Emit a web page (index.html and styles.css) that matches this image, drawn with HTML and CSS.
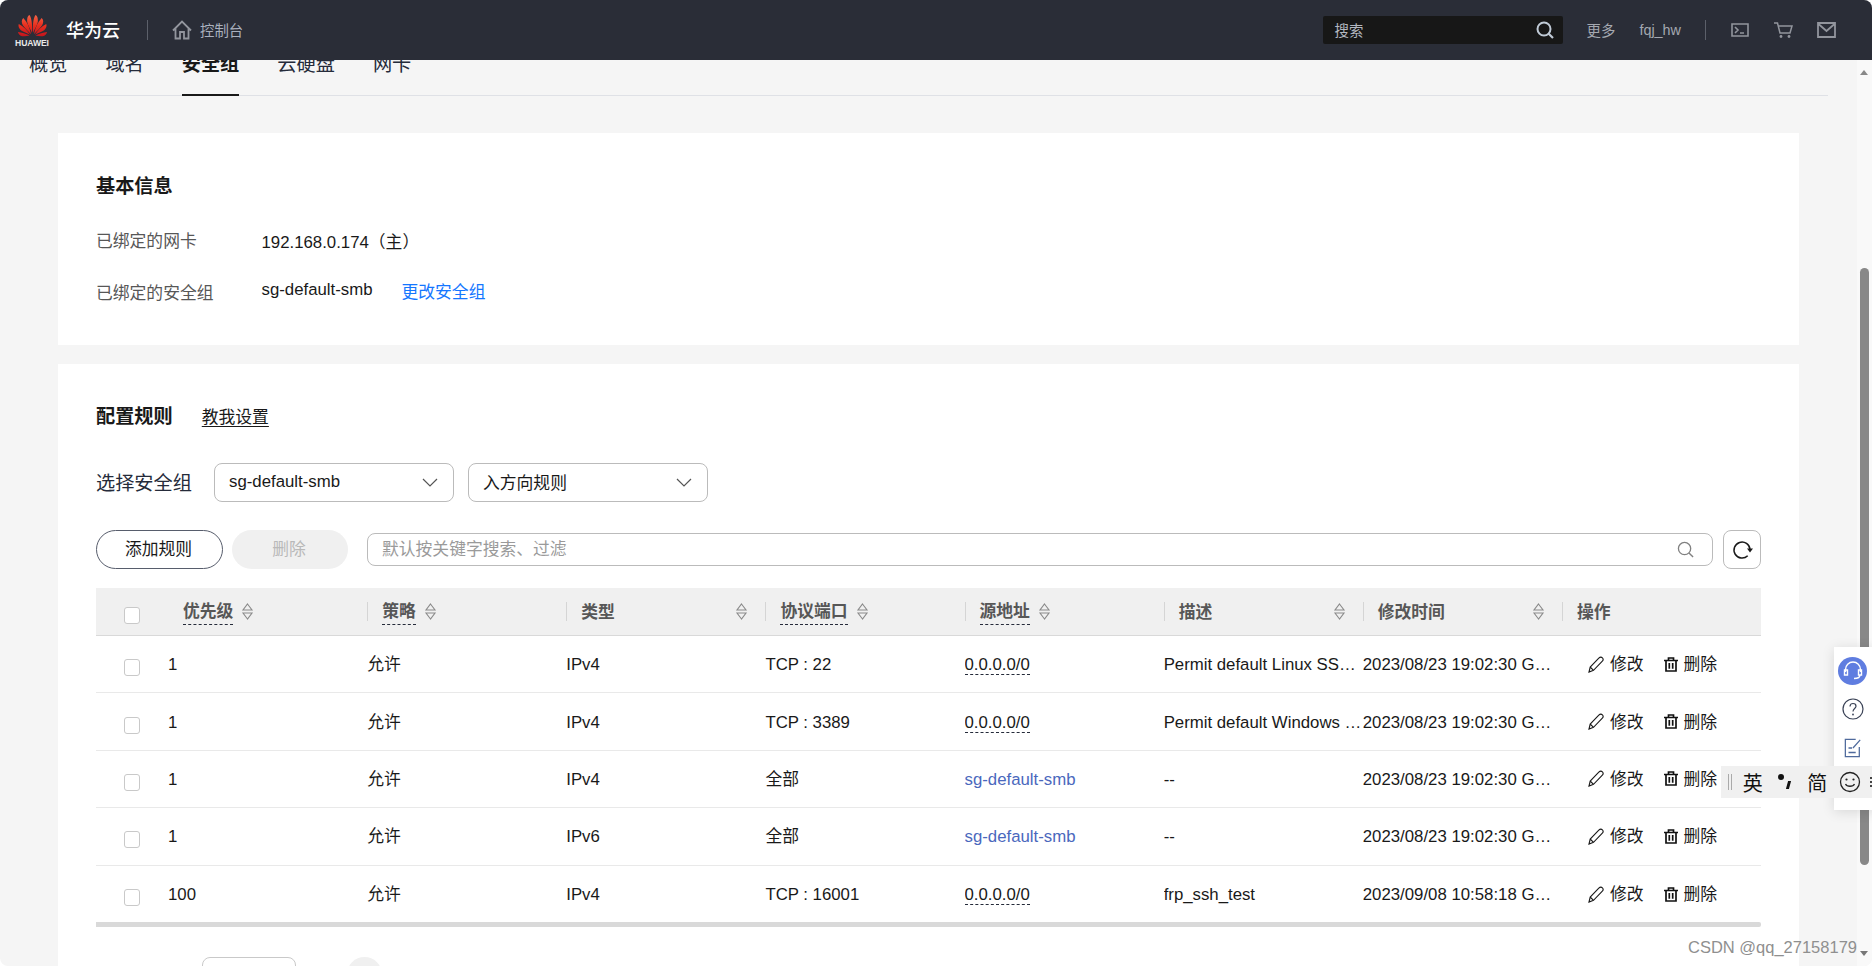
FILE: index.html
```html
<!DOCTYPE html>
<html lang="zh-CN">
<head>
<meta charset="utf-8">
<title>安全组</title>
<link rel="stylesheet" href="styles.css">
</head>
<body>
<svg class="defs" width="0" height="0" aria-hidden="true">
  <defs>
    <linearGradient id="petal" gradientUnits="userSpaceOnUse" x1="16" y1="0" x2="16" y2="20"><stop offset="0" stop-color="#f4694a"/><stop offset=".5" stop-color="#e8301f"/><stop offset="1" stop-color="#c4141c"/></linearGradient>
    <symbol id="sort" viewBox="0 0 12 17"><path d="M6 1 10.500 7H1.500ZM6 16 1.500 10H10.500Z" fill="none" stroke="#8a8a8a" stroke-width="1.100"/></symbol>
    <symbol id="pen" viewBox="0 0 16 17"><path d="M1 16 2.200 11 10.800 2.200C12 1 13.400 .9 14.400 1.800 15.400 2.800 15.300 4.200 14.100 5.400L5.500 14.300ZM2.200 11 5.500 14.300" fill="none" stroke="#191919" stroke-width="1.100"/></symbol>
    <symbol id="trash" viewBox="0 0 14 15"><path d="M0 3.500H14M4.500 3.500V1H9.500V3.500M2 3.500V14H12V3.500M5.300 6V11.800M8.700 6V11.800" fill="none" stroke="#111" stroke-width="1.700"/></symbol>
  </defs>
</svg>
<div class="viewport">
  <header class="topbar">
    <div class="brand">
      <div class="logo">
        <svg class="logo-mark" viewBox="0 0 32 20.500" width="31" height="23" preserveAspectRatio="none" aria-hidden="true">
          <g fill="url(#petal)">
            <path d="M13 1C11 1.500 10.200 4 10.500 7 11 10 13.500 13 15.500 17 15.800 11 15.700 5 13 1Z"/>
            <path d="M19 1C21 1.500 21.800 4 21.500 7 21 10 18.500 13 16.500 17 16.200 11 16.300 5 19 1Z"/>
            <path d="M6.500 3.500C4.500 5 4.500 7.500 6 10 8 12.500 11 15 14.500 18 13 12 10.500 7 6.500 3.500Z"/>
            <path d="M25.500 3.500C27.500 5 27.500 7.500 26 10 24 12.500 21 15 17.500 18 19 12 21.500 7 25.500 3.500Z"/>
            <path d="M1.800 9C1 11 2 13 4 14.500 7 16 10 17 13.500 18.500 10.500 14.500 6.500 11 1.800 9Z"/>
            <path d="M30.200 9C31 11 30 13 28 14.500 25 16 22 17 18.500 18.500 21.500 14.500 25.500 11 30.200 9Z"/>
            <path d="M1 16C1.500 18 3 19.500 5.500 19.800 8.500 20 10.500 19.700 13 19.200 9 17.500 5 16.300 1 16Z"/>
            <path d="M31 16C30.500 18 29 19.500 26.500 19.800 23.500 20 21.500 19.700 19 19.200 23 17.500 27 16.300 31 16Z"/>
          </g>
        </svg>
        <span class="logo-word">HUAWEI</span>
      </div>
      <span class="brand-name">华为云</span>
      <span class="bar-sep"></span>
      <svg class="home" viewBox="0 0 20 20" width="20" height="20" aria-hidden="true"><path d="M1 10.500 10 1.500 19 10.500M3.500 8V18.500H8V12H12V18.500H16.500V8" fill="none" stroke="#92959d" stroke-width="1.800"/></svg>
      <span class="console">控制台</span>
    </div>
    <div class="bar-right">
      <div class="global-search">
        <span>搜索</span>
        <svg viewBox="0 0 18 18" width="18" height="18" aria-hidden="true"><circle cx="8" cy="8" r="6.500" fill="none" stroke="#c0cad6" stroke-width="2"/><path d="M12.500 12.500 17 17" stroke="#c0cad6" stroke-width="2.200"/></svg>
      </div>
      <span class="bar-link more">更多</span>
      <span class="bar-link user">fqj_hw</span>
      <span class="bar-sep right"></span>
      <svg class="bar-icon" viewBox="0 0 18 14" width="18" height="14" aria-hidden="true"><path d="M1 1H17V13H1ZM4 4 7 7 4 10M9 10H13" fill="none" stroke="#92959d" stroke-width="1.600"/></svg>
      <svg class="bar-icon" viewBox="0 0 19 16" width="19" height="16" aria-hidden="true"><path d="M0 1H3.500L6 11H16L18 4H4.500" fill="none" stroke="#92959d" stroke-width="1.500"/><circle cx="7" cy="14.500" r="1.400" fill="#92959d"/><circle cx="15" cy="14.500" r="1.400" fill="#92959d"/></svg>
      <svg class="bar-icon tight" viewBox="0 0 19 16" width="19" height="16" aria-hidden="true"><path d="M1 1H18V15H1ZM1.500 2 9.500 9 17.500 2" fill="none" stroke="#92959d" stroke-width="1.800"/></svg>
    </div>
  </header>

  <main class="page">
    <nav class="tabs">
      <span class="tab first">概览</span>
      <span class="tab">域名</span>
      <span class="tab active">安全组</span>
      <span class="tab">云硬盘</span>
      <span class="tab">网卡</span>
    </nav>

    <section class="card info">
      <h2 class="card-title">基本信息</h2>
      <div class="info-row"><span class="info-label">已绑定的网卡</span><span class="info-value">192.168.0.174（主）</span></div>
      <div class="info-row second"><span class="info-label">已绑定的安全组</span><span class="info-value up">sg-default-smb</span><a class="change-link">更改安全组</a></div>
    </section>

    <section class="card rules">
      <div class="rules-head"><h2 class="card-title nudge">配置规则</h2><a class="teach">教我设置</a></div>
      <div class="select-row">
        <span class="select-label">选择安全组</span>
        <div class="select"><span class="select-value">sg-default-smb</span><svg class="chev" viewBox="0 0 16 9" width="16" height="9" aria-hidden="true"><path d="M1 1 8 8 15 1" fill="none" stroke="#555" stroke-width="1.200"/></svg></div>
        <div class="select"><span class="select-value">入方向规则</span><svg class="chev" viewBox="0 0 16 9" width="16" height="9" aria-hidden="true"><path d="M1 1 8 8 15 1" fill="none" stroke="#555" stroke-width="1.200"/></svg></div>
      </div>
      <div class="tool-row">
        <button class="btn primary">添加规则</button>
        <button class="btn disabled">删除</button>
        <div class="filter">
          <span class="placeholder">默认按关键字搜索、过滤</span>
          <svg viewBox="0 0 18 18" width="17" height="17" aria-hidden="true"><circle cx="8" cy="8" r="6.500" fill="none" stroke="#808080" stroke-width="1.400"/><path d="M12.700 12.700 17 17" stroke="#808080" stroke-width="1.500"/></svg>
        </div>
        <button class="refresh" aria-label="刷新"><svg viewBox="0 0 21 20" width="21" height="20" aria-hidden="true"><path d="M15.700 15.700A8 8 0 1 1 18 9.500" fill="none" stroke="#191919" stroke-width="1.500"/><path d="M15 8.500H21L18 12.500Z" fill="#191919"/></svg></button>
      </div>

      <div class="table">
        <div class="thead">
          <div class="cell-check"><span class="checkbox"></span></div>
          <div class="th first"><span class="tip">优先级</span><svg class="sort near"><use href="#sort"/></svg></div>
          <div class="th"><span class="tip">策略</span><svg class="sort near"><use href="#sort"/></svg></div>
          <div class="th"><span class="plain">类型</span><svg class="sort far"><use href="#sort"/></svg></div>
          <div class="th"><span class="tip">协议端口</span><svg class="sort near"><use href="#sort"/></svg></div>
          <div class="th"><span class="tip">源地址</span><svg class="sort near"><use href="#sort"/></svg></div>
          <div class="th"><span class="plain">描述</span><svg class="sort far"><use href="#sort"/></svg></div>
          <div class="th"><span class="plain">修改时间</span><svg class="sort far"><use href="#sort"/></svg></div>
          <div class="th"><span class="plain">操作</span></div>
        </div>

        <div class="tr">
          <div class="cell-check"><span class="checkbox"></span></div>
          <div class="td">1</div><div class="td">允许</div><div class="td">IPv4</div><div class="td">TCP : 22</div>
          <div class="td"><span class="addr">0.0.0.0/0</span></div>
          <div class="td">Permit default Linux SSH remote access</div>
          <div class="td time">2023/08/23 19:02:30 GMT+08:00</div>
          <div class="td ops"><svg class="pen"><use href="#pen"/></svg><span>修改</span><svg class="trash"><use href="#trash"/></svg><span>删除</span></div>
        </div>
        <div class="tr">
          <div class="cell-check"><span class="checkbox"></span></div>
          <div class="td">1</div><div class="td">允许</div><div class="td">IPv4</div><div class="td">TCP : 3389</div>
          <div class="td"><span class="addr">0.0.0.0/0</span></div>
          <div class="td">Permit default Windows remote desktop</div>
          <div class="td time">2023/08/23 19:02:30 GMT+08:00</div>
          <div class="td ops"><svg class="pen"><use href="#pen"/></svg><span>修改</span><svg class="trash"><use href="#trash"/></svg><span>删除</span></div>
        </div>
        <div class="tr">
          <div class="cell-check"><span class="checkbox"></span></div>
          <div class="td">1</div><div class="td">允许</div><div class="td">IPv4</div><div class="td">全部</div>
          <div class="td"><a class="group-link">sg-default-smb</a></div>
          <div class="td">--</div>
          <div class="td time">2023/08/23 19:02:30 GMT+08:00</div>
          <div class="td ops"><svg class="pen"><use href="#pen"/></svg><span>修改</span><svg class="trash"><use href="#trash"/></svg><span>删除</span></div>
        </div>
        <div class="tr">
          <div class="cell-check"><span class="checkbox"></span></div>
          <div class="td">1</div><div class="td">允许</div><div class="td">IPv6</div><div class="td">全部</div>
          <div class="td"><a class="group-link">sg-default-smb</a></div>
          <div class="td">--</div>
          <div class="td time">2023/08/23 19:02:30 GMT+08:00</div>
          <div class="td ops"><svg class="pen"><use href="#pen"/></svg><span>修改</span><svg class="trash"><use href="#trash"/></svg><span>删除</span></div>
        </div>
        <div class="tr last">
          <div class="cell-check"><span class="checkbox"></span></div>
          <div class="td">100</div><div class="td">允许</div><div class="td">IPv4</div><div class="td">TCP : 16001</div>
          <div class="td"><span class="addr">0.0.0.0/0</span></div>
          <div class="td">frp_ssh_test</div>
          <div class="td time">2023/09/08 10:58:18 GMT+08:00</div>
          <div class="td ops"><svg class="pen"><use href="#pen"/></svg><span>修改</span><svg class="trash"><use href="#trash"/></svg><span>删除</span></div>
        </div>
        <div class="hscroll"></div>
      </div>

      <div class="pager"><span class="page-size"></span><span class="page-dot"></span></div>
    </section>
  </main>

  <div class="scrollbar">
    <span class="arrow up"></span>
    <span class="thumb"></span>
    <span class="arrow down"></span>
  </div>

  <aside class="float-tools">
    <span class="tool-head"><svg viewBox="0 0 22 22" width="22" height="22" aria-hidden="true"><path d="M3.500 12V9.500A7.500 7.500 0 0 1 18.500 9.500V12M2.500 10H5.500V15H2.500ZM16.500 10H19.500V15H16.500ZM18 15C18 17.500 15.500 18.500 12 18.500" fill="none" stroke="#fff" stroke-width="1.400"/></svg></span>
    <svg class="tool-icon help" viewBox="0 0 22 22" width="22" height="22" aria-hidden="true"><circle cx="11" cy="11" r="10" fill="none" stroke="#3a4256" stroke-width="1.200"/><path d="M8 8.500C8 6.500 9.500 5.500 11 5.500 12.800 5.500 14 6.700 14 8.200 14 10.500 11 10.500 11 13.500" fill="none" stroke="#3a4256" stroke-width="1.200"/><circle cx="11" cy="16.500" r=".9" fill="#3a4256"/></svg>
    <svg class="tool-icon note" viewBox="0 0 20 22" width="18" height="20" aria-hidden="true"><path d="M13 1.500H1.500V20.500H17V10M5 11H9M5 16H13M10 11 18 2" fill="none" stroke="#4f6a9c" stroke-width="1.400"/></svg>
  </aside>

  <div class="ime">
    <span class="ime-grip"></span>
    <span class="ime-text">英</span>
    <span class="ime-punct"><i></i><b></b></span>
    <span class="ime-text">简</span>
    <svg viewBox="0 0 22 22" width="22" height="22" aria-hidden="true"><circle cx="11" cy="11" r="9.500" fill="none" stroke="#222" stroke-width="1.300"/><circle cx="7.500" cy="8.500" r="1.100" fill="#222"/><circle cx="14.500" cy="8.500" r="1.100" fill="#222"/><path d="M6.500 13C8 16 14 16 15.500 13" fill="none" stroke="#222" stroke-width="1.300"/></svg>
    <span class="ime-more"></span>
  </div>

  <div class="watermark">CSDN @qq_27158179</div>
</div>
</body>
</html>
```

FILE: styles.css
```css
* { box-sizing: border-box; }
html, body { margin: 0; height: 100%; }
body {
  font-family: "Liberation Sans", "Noto Sans CJK SC", sans-serif;
  font-size: 16.8px;
  color: #191919;
  background: #fff;
  overflow: hidden;
}
.defs { position: absolute; }
.viewport {
  position: relative;
  width: 1872px;
  height: 966px;
  overflow: hidden;
  background: #f5f5f5;
  border-radius: 8px;
}

/* top bar */
.topbar {
  position: absolute;
  inset: 0 0 auto 0;
  height: 60px;
  background: #2a2d37;
  display: flex;
  justify-content: space-between;
  align-items: center;
  z-index: 3;
}
.brand { display: flex; align-items: center; padding-left: 16px; }
.logo { display: flex; flex-direction: column; align-items: center; width: 32px; }
.logo-mark { display: block; margin-top: 1px; }
.logo-word { font-size: 8.600px; font-weight: 700; color: #e8e8e8; line-height: 10px; margin-top: 1px; letter-spacing: -.1px; }
.brand-name { font-size: 18px; color: #fff; margin-left: 18px; font-weight: 500; padding-bottom: 2px; }
.bar-sep { display: block; width: 1px; height: 20px; background: #5c606a; margin-left: 27px; }
.home { margin-left: 24px; }
.console { font-size: 14.400px; color: #a9b0bd; margin-left: 8px; padding-bottom: 2px; }
.bar-right { display: flex; align-items: center; padding-right: 36px; }
.global-search {
  width: 240px;
  height: 28px;
  background: #171717;
  border-radius: 2px;
  display: flex;
  justify-content: space-between;
  align-items: center;
  padding: 0 9px 0 12px;
  font-size: 14.400px;
  color: #b4b8c0;
}
.global-search span { padding-bottom: 2px; }
.bar-link { font-size: 14.400px; color: #a4a8b0; }
.more { margin-left: 24px; padding-bottom: 2px; }
.user { margin-left: 24px; }
.bar-sep.right { margin-left: 24px; }
.bar-icon { margin-left: 25px; }
.bar-icon.tight { margin-left: 24px; }

/* page */
.page { padding: 43px 73px 0 58px; }
.tabs {
  display: flex;
  margin: 0 -29px 37px -29px;
  height: 53px;
  padding-top: 9px;
  border-bottom: 1px solid #dfe1e6;
  font-size: 19.200px;
  gap: 38px;
  color: #252b3a;
}
.tab { height: 44px; line-height: 26px; }
.tab.active { font-weight: 700; border-bottom: 2px solid #191919; color: #191919; }
.card { background: #fff; padding: 0 38px; }
.card.info { height: 212px; padding-top: 40px; }
.card-title { margin: 0; font-size: 19.200px; font-weight: 700; color: #191919; line-height: 28px; }
.card-title.nudge { position: relative; top: 1px; }
.info-row { display: flex; align-items: center; height: 28px; margin-top: 25px; }
.info-row.second { margin-top: 24px; }
.info-label { width: 165.500px; color: #575757; }
.info-value { color: #191919; padding-top: 2px; }
.info-value.up { position: relative; top: -3px; }
.change-link { color: #1476ff; margin-left: 29px; position: relative; top: -1px; }
.card.rules { margin-top: 19px; height: 640px; padding-top: 38px; position: relative; }
.rules-head { display: flex; align-items: center; height: 28px; }
.teach { color: #191919; margin-left: 29px; text-decoration: underline; text-underline-offset: 3px; }
.select-row { display: flex; align-items: center; margin-top: 33px; height: 39px; }
.select-label { font-size: 19.200px; color: #252b3a; width: 118px; padding-bottom: 2px; }
.select {
  width: 240px;
  height: 39px;
  border: 1px solid #bbb;
  border-radius: 8px;
  display: flex;
  align-items: center;
  justify-content: space-between;
  padding: 0 15px 0 14px;
  margin-right: 14px;
}
.select-value { position: relative; top: -1px; }
.chev { flex: none; }
.tool-row { display: flex; align-items: center; margin-top: 28px; height: 39px; }
.btn {
  height: 39px;
  border-radius: 20px;
  font: inherit;
  padding: 0 2px 4px 0;
}
.btn.primary { width: 127px; background: #fff; border: 1px solid #575d6c; color: #191919; }
.btn.disabled { width: 116px; margin-left: 9px; background: #f0f0f0; border: 0; color: #b9b9b9; }
.filter {
  width: 1346px;
  height: 33px;
  margin-left: 19px;
  border: 1px solid #bbb;
  border-radius: 8px;
  display: flex;
  align-items: center;
  justify-content: space-between;
  padding: 0 18px 0 14px;
}
.placeholder { color: #9a9a9a; padding-bottom: 4px; }
.refresh {
  width: 38px;
  height: 39px;
  margin-left: 10px;
  background: #fff;
  border: 1px solid #bbb;
  border-radius: 8px;
  padding: 0;
  display: flex;
  align-items: center;
  justify-content: center;
}

/* table */
.table { margin-top: 19px; width: 1665px; }
.thead, .tr { display: grid; grid-template-columns: 72px repeat(8, 1fr); }
.thead { height: 48px; background: #f0f0f0; border-bottom: 1px solid #d9d9d9; }
.tr { height: 57.400px; border-bottom: 1px solid #e9e9e9; align-items: center; }
.tr.last { border-bottom: 0; }
.cell-check { display: flex; justify-content: flex-start; padding-left: 28px; height: 100%; align-items: center; }
.checkbox { display: block; width: 16px; height: 17px; margin-top: 7px; background: #fff; border: 1px solid #c9c9c9; border-radius: 3px; }
.th {
  position: relative;
  display: flex;
  align-items: center;
  justify-content: space-between;
  padding: 0 17px 0 15px;
  font-weight: 700;
  color: #575757;
  white-space: nowrap;
}
.th::before {
  content: "";
  position: absolute;
  left: 0;
  top: 14px;
  height: 19px;
  width: 1px;
  background: #d5d5d5;
}
.th.first::before { display: none; }
.th .tip { border-bottom: 1px dashed #252b3a; line-height: 24px; position: relative; top: 1px; }
.th .plain { position: relative; top: -1px; }
.sort { width: 13px; height: 17px; flex: none; }
.sort.near { margin-left: 8px; margin-right: auto; }
.td {
  white-space: nowrap;
  overflow: hidden;
  text-overflow: ellipsis;
  padding: 2px 1px 0 0;
  line-height: 28px;
  color: #191919;
}
.td.time { padding-right: 9px; }
.addr { border-bottom: 1px dashed #252b3a; }
.group-link { color: #4a68bd; }
.ops { display: flex; align-items: center; padding: 0 0 0 26px; overflow: visible; }
.ops span { padding-top: 2px; }
.pen { width: 16px; height: 17px; flex: none; margin-right: 6px; }
.trash { width: 14px; height: 15px; flex: none; margin-left: 21px; margin-right: 5px; }
.hscroll { height: 5px; background: #d9d9d9; margin-top: -1px; border-radius: 0 2px 2px 0; }
.pager { display: flex; margin-top: 30px; padding-left: 106px; }
.page-size { width: 94px; height: 40px; background: #fff; border: 1px solid #c9c9c9; border-radius: 8px; }
.page-dot { width: 35px; height: 35px; margin-left: 51px; background: #f0f0f0; border-radius: 50%; }

/* window scrollbar */
.scrollbar { position: absolute; top: 60px; right: 0; bottom: 0; width: 15px; background: #f9f9f9; z-index: 1; }
.thumb { position: absolute; left: 3px; top: 208px; width: 9px; height: 597px; background: #888; border-radius: 5px; }
.arrow { position: absolute; left: 3px; width: 0; height: 0; border-left: 4px solid transparent; border-right: 4px solid transparent; }
.arrow.up { top: 10px; border-bottom: 5px solid #888; }
.arrow.down { bottom: 10px; border-top: 5px solid #777; }

/* floating tools */
.float-tools {
  position: absolute;
  left: 1834px;
  top: 647px;
  width: 44px;
  height: 163px;
  background: #fff;
  box-shadow: 0 2px 12px rgba(0, 0, 0, .12);
  z-index: 2;
  display: flex;
  flex-direction: column;
  align-items: flex-start;
  padding: 10px 0 0 4px;
}
.tool-head { width: 29px; height: 28px; border-radius: 50%; background: #5f7de0; display: flex; align-items: center; justify-content: center; }
.tool-icon.help { margin: 13px 0 0 4px; }
.tool-icon.note { margin: 18px 0 0 6px; }

/* IME status bar */
.ime {
  position: absolute;
  left: 1721px;
  top: 766px;
  width: 151px;
  height: 32px;
  background: #f0f0f0;
  display: flex;
  align-items: center;
  z-index: 4;
  padding-left: 7px;
}
.ime-grip { width: 4px; height: 16px; border-left: 1px solid #aaa; border-right: 1px solid #aaa; }
.ime-text { font-size: 20px; color: #111; font-family: "Noto Sans CJK SC", sans-serif; }
.ime-grip + .ime-text { margin-left: 11px; }
.ime-punct { position: relative; width: 20px; height: 20px; margin: 0 12px 0 14px; }
.ime-punct i { position: absolute; left: 1px; top: 2px; width: 6px; height: 6px; border-radius: 50%; background: #111; }
.ime-punct b { position: absolute; left: 10px; top: 9px; width: 3px; height: 8px; background: #111; transform: skewX(-15deg); }
.ime svg { margin-left: 12px; flex: none; }
.ime-more { width: 2px; height: 2px; margin-left: 9px; box-shadow: 0 -4px 0 #444, 0 4px 0 #444; background: #444; }

.watermark {
  position: absolute;
  right: 15px;
  top: 938px;
  font-size: 16.500px;
  color: #8f8f8f;
  z-index: 2;
}
```
